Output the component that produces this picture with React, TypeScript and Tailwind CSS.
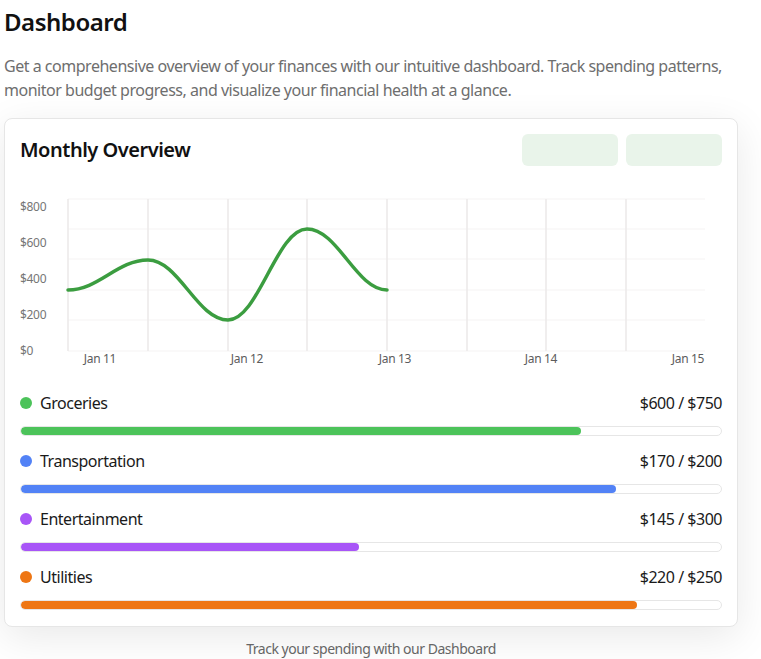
import React from "react";

const cats = [
  { name: "Groceries", spent: 600, budget: 750, color: "bg-[#4cc35a]" },
  { name: "Transportation", spent: 170, budget: 200, color: "bg-[#5282f6]" },
  { name: "Entertainment", spent: 145, budget: 300, color: "bg-[#a855f7]" },
  { name: "Utilities", spent: 220, budget: 250, color: "bg-[#ee7614]" },
];

function Chart() {
  const ox = 20;
  const oy = 182;
  const vx = [68, 148, 228, 307, 387, 467, 546, 626];
  const hy = [198, 228, 258, 289, 319, 350];
  const pts: [number, number][] = [
    [68, 289],
    [148, 259],
    [228, 319],
    [307, 228],
    [387, 289],
  ];
  let d = `M${pts[0][0] - ox},${pts[0][1] - oy}`;
  for (let i = 1; i < pts.length; i++) {
    const [x0, y0] = pts[i - 1];
    const [x1, y1] = pts[i];
    const dx = (x1 - x0) / 2.6;
    d += ` C${x0 + dx - ox},${y0 - oy} ${x1 - dx - ox},${y1 - oy} ${x1 - ox},${y1 - oy}`;
  }
  const yl = [
    ["$800", 206],
    ["$600", 242],
    ["$400", 278],
    ["$200", 314],
    ["$0", 350],
  ] as const;
  const xl = [
    ["Jan 11", 100],
    ["Jan 12", 247],
    ["Jan 13", 395],
    ["Jan 14", 541],
    ["Jan 15", 688],
  ] as const;
  return (
    <svg width={702} height={192} className="block" style={{ fontFamily: "'Noto Sans', sans-serif", letterSpacing: "-0.02em" }}>
      {hy.map((y) => (
        <line key={y} x1={68 - ox} x2={705 - ox} y1={y - oy} y2={y - oy} stroke="#f5f3f3" strokeWidth={1} />
      ))}
      {vx.map((x) => (
        <line key={x} x1={x - ox} x2={x - ox} y1={198 - oy} y2={350 - oy} stroke="#ebe8e8" strokeWidth={1.5} />
      ))}
      {yl.map(([t, y]) => (
        <text key={t} x={0} y={y - oy + 4} fontSize={12} fill="#767676">
          {t}
        </text>
      ))}
      {xl.map(([t, x]) => (
        <text key={t} x={x - ox} y={358 - oy + 4} fontSize={12} fill="#5c5c5c" textAnchor="middle">
          {t}
        </text>
      ))}
      <path d={d} fill="none" stroke="#3b9d40" strokeWidth={3.5} strokeLinecap="round" />
    </svg>
  );
}

export default function App() {
  return (
    <div className="min-h-[659px] bg-white tracking-[-0.03em]" style={{ fontFamily: "'Noto Sans', 'Open Sans', sans-serif" }}>
      <div className="ml-1 w-[734px] pt-[6px]">
        <h1 className="text-2xl leading-8 font-[580] text-[#111]">Dashboard</h1>
        <p className="mt-4 text-base leading-6 text-[#6e6e6e]">
          Get a comprehensive overview of your finances with our intuitive dashboard. Track spending patterns,
          monitor budget progress, and visualize your financial health at a glance.
        </p>
        <div className="mt-4 rounded-lg border border-[#e6e6e6] bg-white px-[15px] pt-[15px] pb-4 shadow-[0_10px_40px_rgba(0,0,0,0.09)]">
          <div className="flex items-center justify-between">
            <h2 className="text-xl font-[580] text-[#111]">Monthly Overview</h2>
            <div className="flex gap-2">
              <div className="h-8 w-24 rounded-md bg-[#e9f4ea]" />
              <div className="h-8 w-24 rounded-md bg-[#e9f4ea]" />
            </div>
          </div>
          <div className="mt-[17px]">
            <Chart />
          </div>
          <div className="mt-4 flex flex-col gap-[13px]">
            {cats.map((c) => (
              <div key={c.name} className="flex flex-col gap-[11px]">
                <div className="flex h-6 items-center justify-between text-base text-[#1a1a1a]">
                  <div className="flex items-center gap-2">
                    <span className={`h-3 w-3 rounded-full ${c.color}`} />
                    <span>{c.name}</span>
                  </div>
                  <span>
                    ${c.spent} / ${c.budget}
                  </span>
                </div>
                <div className="h-[10px] w-full overflow-hidden rounded-full border border-[#e6e6e6] bg-white">
                  <div className={`h-full rounded-full ${c.color}`} style={{ width: `${(c.spent / c.budget) * 100}%` }} />
                </div>
              </div>
            ))}
          </div>
        </div>
        <p className="mt-3 text-center text-sm leading-5 text-[#666]">Track your spending with our Dashboard</p>
      </div>
    </div>
  );
}
